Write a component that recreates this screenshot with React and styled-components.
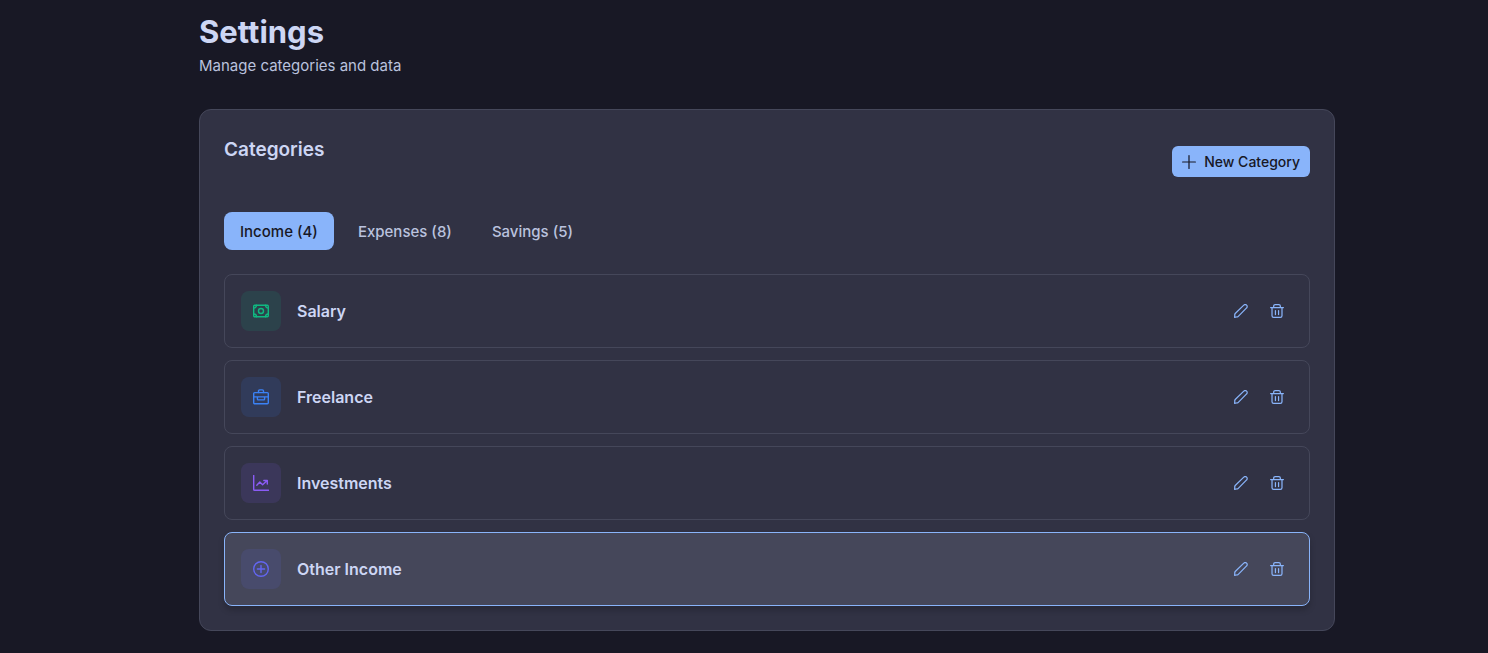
import React, { useState } from "react"
import styled, { createGlobalStyle } from "styled-components"

const categories = {
  Income: [
    { name: "Salary", icon: "money", color: "#10b981" },
    { name: "Freelance", icon: "briefcase", color: "#3b82f6" },
    { name: "Investments", icon: "chart", color: "#8b5cf6" },
    { name: "Other Income", icon: "plusCircle", color: "#6366f1" },
  ],
}

const tabs = [
  { name: "Income", count: 4 },
  { name: "Expenses", count: 8 },
  { name: "Savings", count: 5 },
]

const shapes = {
  money: (
    <>
      <rect x="0.7" y="2.2" width="14.6" height="11.6" rx="1" />
      <circle cx="8" cy="8" r="2.5" />
      <path d="M.7 5a2.8 2.8 0 0 0 2.8-2.8M15.3 5a2.8 2.8 0 0 1-2.8-2.8M.7 11a2.8 2.8 0 0 1 2.8 2.8M15.3 11a2.8 2.8 0 0 0-2.8 2.8" />
    </>
  ),
  briefcase: (
    <>
      <rect x="0.7" y="3.6" width="14.6" height="11.2" rx="1" />
      <path d="M5.5 3.6V2.1c0-.7.5-1.2 1.2-1.2h2.6c.7 0 1.2.5 1.2 1.2v1.5M.7 7.9h14.6M4.4 8v2.1c0 .5.3.8.8.8h5.6c.5 0 .8-.3.8-.8V8" />
    </>
  ),
  chart: (
    <>
      <path d="M.7.4v14c0 .5.4.9.9.9h14" />
      <path d="M3.8 10.2 6.8 7l2.8 2.8 4.6-4.2M10.8 5.5h3.5V9" />
    </>
  ),
  plusCircle: (
    <>
      <circle cx="8" cy="8" r="7.3" />
      <path d="M8 4.4v7.2M4.4 8h7.2" />
    </>
  ),
  plus: <path d="M8 .7v14.6M.7 8h14.6" />,
  pencil: (
    <path d="M.7 15.3l.3-3.7c0-.3.2-.6.4-.8L11.2 1.3a2.2 2.2 0 0 1 3.2 0 2.2 2.2 0 0 1 0 3.2L4.9 14.2c-.2.2-.5.4-.8.4L.7 15.3z" />
  ),
  trash: (
    <>
      <path d="M.7 4.1h14.6M4.2 4.1V2.4c0-1 .7-1.7 1.7-1.7h4.2c1 0 1.7.7 1.7 1.7v1.7" />
      <path d="M2.3 4.1v9.3c0 1.1.8 1.9 1.9 1.9h7.6c1.1 0 1.9-.8 1.9-1.9V4.1M6.2 7.5v4.6M9.8 7.5v4.6" />
    </>
  ),
}

const Icon = ({ name, size = 16 }) => (
  <IconSvg viewBox="0 0 16 16" width={size} height={size} aria-hidden="true">
    {shapes[name]}
  </IconSvg>
)

const CategoryItem = ({ name, icon, color, active }) => (
  <Item $active={active}>
    <IconTile $color={color}>
      <Icon name={icon} />
    </IconTile>
    <ItemName>{name}</ItemName>
    <ItemActions>
      <IconButton type="button" aria-label={`Edit ${name}`}>
        <Icon name="pencil" size={14} />
      </IconButton>
      <IconButton type="button" aria-label={`Delete ${name}`}>
        <Icon name="trash" size={14} />
      </IconButton>
    </ItemActions>
  </Item>
)

const App = () => {
  const [tab, setTab] = useState("Income")
  const items = categories[tab] || []

  return (
    <>
      <GlobalStyle />
      <Page>
        <Container>
          <Title>Settings</Title>
          <Subtitle>Manage categories and data</Subtitle>
          <Card>
            <CardHeader>
              <CardTitle>Categories</CardTitle>
              <NewButton type="button">
                <Icon name="plus" size={14} />
                New Category
              </NewButton>
            </CardHeader>
            <Tabs role="tablist">
              {tabs.map(({ name, count }) => (
                <Tab
                  key={name}
                  type="button"
                  role="tab"
                  aria-selected={tab === name}
                  $active={tab === name}
                  onClick={() => setTab(name)}
                >
                  {name} ({count})
                </Tab>
              ))}
            </Tabs>
            <List>
              {items.map((item, i) => (
                <CategoryItem key={item.name} {...item} active={i === 3} />
              ))}
            </List>
          </Card>
        </Container>
      </Page>
    </>
  )
}

const GlobalStyle = createGlobalStyle`
  * {
    box-sizing: border-box;
  }
  body {
    margin: 0;
    background: #181825;
    color: #cdd6f4;
    font-family: Inter, "Liberation Sans", sans-serif;
    font-size: 16px;
    line-height: 24px;
  }
  button {
    font-family: inherit;
    cursor: pointer;
  }
`

const IconSvg = styled.svg`
  display: block;
  flex: none;
  fill: none;
  stroke: currentColor;
  stroke-width: 1.4;
  stroke-linecap: round;
  stroke-linejoin: round;
`

const Page = styled.div`
  padding-left: 46px;
`

const Container = styled.main`
  max-width: 1200px;
  margin: 0 auto;
  padding: 12px 32px 22px;
`

const Title = styled.h1`
  margin: 0 0 2px;
  font-size: 31px;
  font-weight: 700;
  line-height: 40px;
`

const Subtitle = styled.p`
  margin: 0 0 31px;
  color: #bac2de;
  font-size: 15px;
`

const Card = styled.section`
  padding: 24px;
  background: #313244;
  border: 1px solid #45475a;
  border-radius: 12px;
`

const CardHeader = styled.div`
  display: flex;
  align-items: center;
  justify-content: space-between;
  margin-bottom: 23px;
`

const CardTitle = styled.h2`
  margin: 0 0 24px;
  font-size: 19px;
  font-weight: 600;
  line-height: 30px;
`

const NewButton = styled.button`
  display: flex;
  align-items: center;
  gap: 8px;
  margin: 12px 0;
  padding: 5px 10px;
  border: 0;
  border-radius: 6px;
  background: #89b4fa;
  color: #181825;
  font-size: 14px;
  font-weight: 500;
  line-height: 21px;
`

const Tabs = styled.div`
  display: flex;
  gap: 8px;
  margin-bottom: 24px;
`

const Tab = styled.button`
  padding: 8px 16px 6px;
  border: 0;
  border-radius: 8px;
  background: ${({ $active }) => ($active ? "#89b4fa" : "transparent")};
  color: ${({ $active }) => ($active ? "#181825" : "#bac2de")};
  font-size: 15px;
  font-weight: 500;
  line-height: 24px;
`

const List = styled.ul`
  display: flex;
  flex-direction: column;
  gap: 12px;
  margin: 0;
  padding: 0;
  list-style: none;
`

const Item = styled.li`
  display: flex;
  align-items: center;
  gap: 16px;
  padding: 16px;
  border: 1px solid ${({ $active }) => ($active ? "#89b4fa" : "#45475a")};
  border-radius: 8px;
  background: ${({ $active }) => ($active ? "#45475a" : "transparent")};
  box-shadow: ${({ $active }) =>
    $active ? "0 4px 6px rgba(0, 0, 0, 0.2)" : "none"};
`

const IconTile = styled.span`
  display: flex;
  align-items: center;
  justify-content: center;
  width: 40px;
  height: 40px;
  border-radius: 8px;
  background: ${({ $color }) => $color}20;
  color: ${({ $color }) => $color};
`

const ItemName = styled.span`
  flex: 1;
  font-weight: 600;
`

const ItemActions = styled.div`
  display: flex;
  gap: 4px;
`

const IconButton = styled.button`
  display: flex;
  align-items: center;
  justify-content: center;
  width: 32px;
  height: 32px;
  padding: 0;
  border: 0;
  border-radius: 6px;
  background: transparent;
  color: #89b4fa;
`

export default App
